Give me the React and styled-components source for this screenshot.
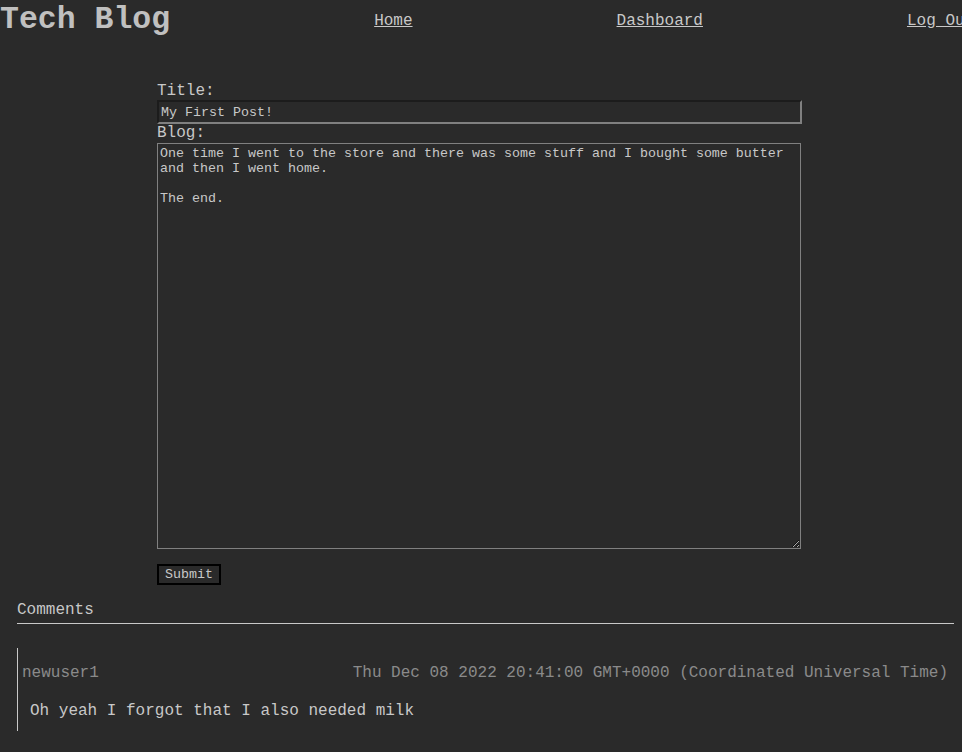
import React, { useState } from "react";
import styled, { createGlobalStyle } from "styled-components";

const GlobalStyle = createGlobalStyle`
  html, body {
    margin: 0;
    padding: 0;
    background-color: #2a2a2a;
    color: #c8c8c8;
    font-family: "Liberation Mono", "Courier New", monospace;
    overflow: hidden;
  }
`;

const Page = styled.div`
  width: 962px;
  height: 752px;
  background-color: #2a2a2a;
`;

const Header = styled.header`
  display: flex;
  align-items: flex-start;
  height: 82px;
  white-space: nowrap;
`;

const Logo = styled.h1`
  margin: 0;
  font-size: 31.5px;
  line-height: 40px;
  font-weight: bold;
  color: #c0c0c0;
`;

const Nav = styled.nav`
  display: flex;
  gap: 204px;
  margin-left: 204px;
  padding-top: 12px;
`;

const NavLink = styled.a`
  color: #c8c8c8;
  font-size: 16px;
  line-height: 18px;
  text-decoration: underline;
`;

const Form = styled.form`
  display: flex;
  flex-direction: column;
  align-items: flex-start;
  margin-left: 157px;
  width: 645px;
`;

const Label = styled.label`
  font-size: 16px;
  line-height: 18px;
  height: ${(p) => p.h || 18}px;
  color: #c8c8c8;
`;

const TitleInput = styled.input`
  box-sizing: border-box;
  width: 645px;
  height: 24px;
  padding: 1px 2px;
  background: #2a2a2a;
  color: #c8c8c8;
  font-family: "Liberation Mono", "Courier New", monospace;
  font-size: 13.33px;
  border-width: 2px;
  border-style: solid;
  border-color: #1c1c1c #808080 #808080 #1c1c1c;
  outline: none;
`;

const BlogArea = styled.textarea`
  box-sizing: border-box;
  width: 644px;
  height: 406px;
  padding: 2px 2px;
  background: #2a2a2a;
  color: #c8c8c8;
  font-family: "Liberation Mono", "Courier New", monospace;
  font-size: 13.33px;
  line-height: 15px;
  border: 1px solid #808080;
  resize: both;
  outline: none;
`;

const SubmitButton = styled.button`
  margin-top: 15px;
  box-sizing: border-box;
  height: 21px;
  width: 64px;
  padding: 0;
  background: #2a2a2a;
  color: #c8c8c8;
  font-family: "Liberation Mono", "Courier New", monospace;
  font-size: 13.33px;
  border: 2px solid #000;
`;

const Comments = styled.section`
  margin: 16px 8px 0 17px;
`;

const CommentsTitle = styled.h3`
  margin: 0;
  padding-bottom: 4px;
  font-size: 16px;
  line-height: 18px;
  font-weight: normal;
  color: #c8c8c8;
  border-bottom: 1px solid #c8c8c8;
`;

const CommentCard = styled.div`
  margin-top: 24px;
  border-left: 1px solid #c8c8c8;
  padding: 16px 6px 11px 4px;
`;

const CommentHead = styled.div`
  display: flex;
  justify-content: space-between;
  font-size: 16px;
  line-height: 18px;
  color: #8a8a8a;
`;

const CommentBody = styled.p`
  margin: 20px 0 0 8px;
  font-size: 16px;
  line-height: 18px;
  color: #c8c8c8;
`;

export default function App() {
  const [title, setTitle] = useState("My First Post!");
  const [body, setBody] = useState(
    "One time I went to the store and there was some stuff and I bought some butter and then I went home.\n\nThe end."
  );

  return (
    <Page>
      <GlobalStyle />
      <Header>
        <Logo>Tech Blog</Logo>
        <Nav>
          <NavLink href="#">Home</NavLink>
          <NavLink href="#">Dashboard</NavLink>
          <NavLink href="#">Log Out</NavLink>
        </Nav>
      </Header>
      <Form onSubmit={(e) => e.preventDefault()}>
        <Label htmlFor="title">Title:</Label>
        <TitleInput id="title" value={title} onChange={(e) => setTitle(e.target.value)} />
        <Label htmlFor="blog" h={19}>Blog:</Label>
        <BlogArea id="blog" value={body} onChange={(e) => setBody(e.target.value)} />
        <SubmitButton type="submit">Submit</SubmitButton>
      </Form>
      <Comments>
        <CommentsTitle>Comments</CommentsTitle>
        <CommentCard>
          <CommentHead>
            <span>newuser1</span>
            <span>Thu Dec 08 2022 20:41:00 GMT+0000 (Coordinated Universal Time)</span>
          </CommentHead>
          <CommentBody>Oh yeah I forgot that I also needed milk</CommentBody>
        </CommentCard>
      </Comments>
    </Page>
  );
}
